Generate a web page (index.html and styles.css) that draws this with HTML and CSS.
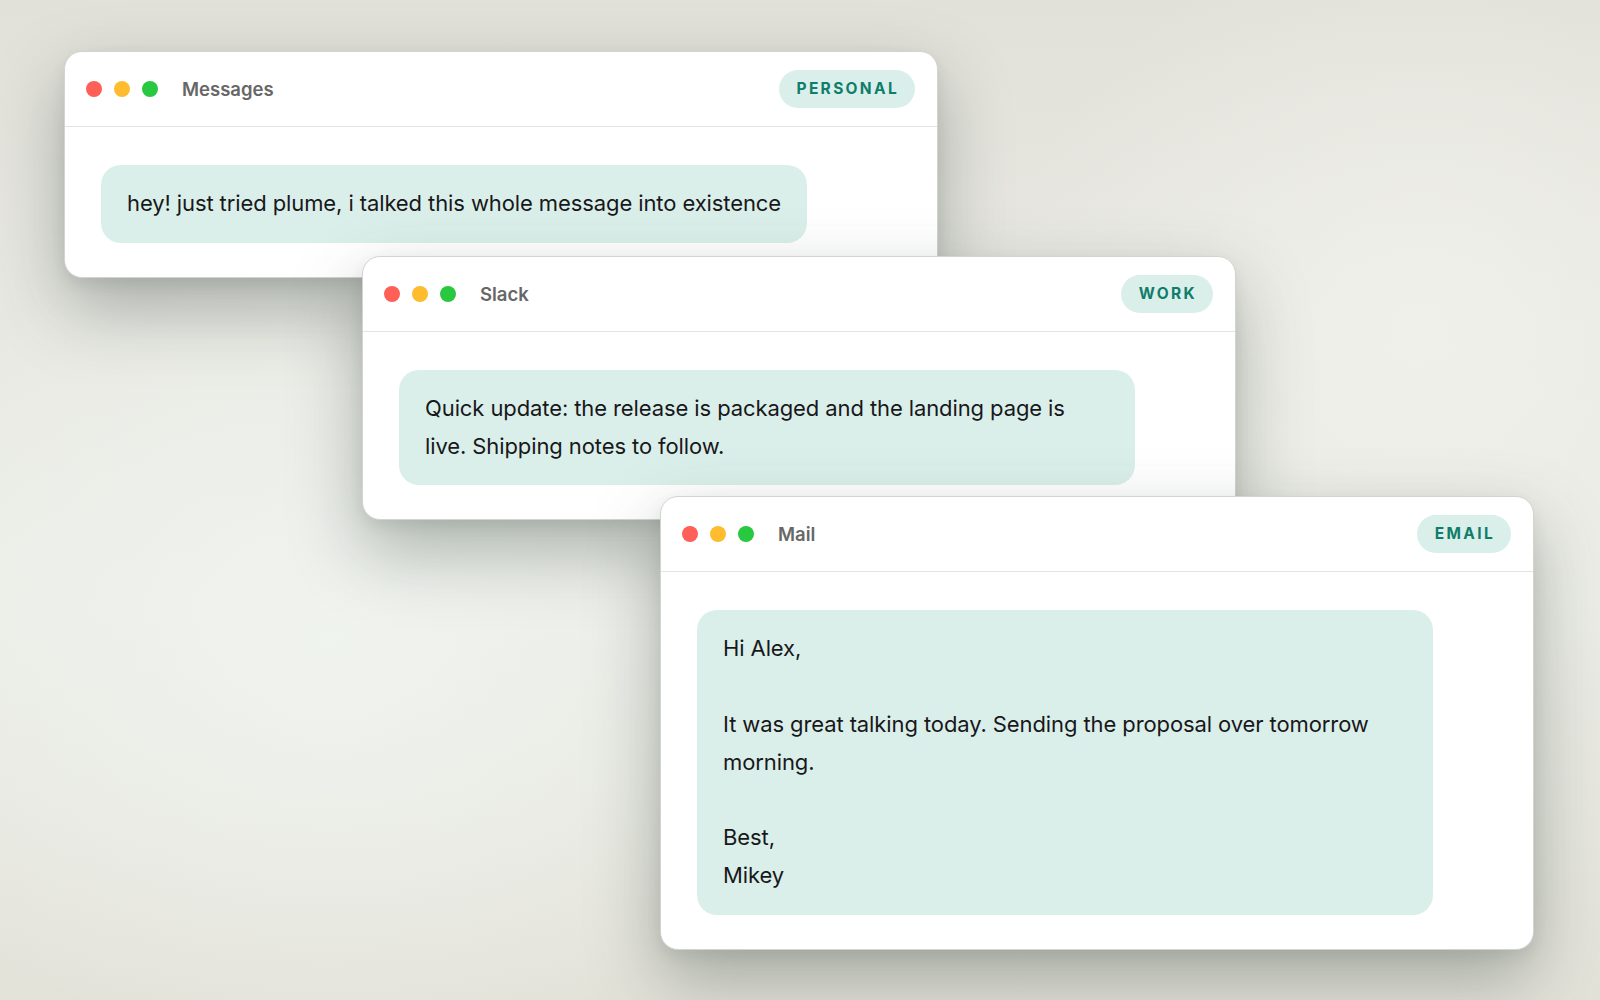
FILE: index.html
```html
<!DOCTYPE html>
<html lang="en">
<head>
<meta charset="utf-8">
<title>Plume</title>
<link rel="stylesheet" href="styles.css">
</head>
<body>
<main class="stack">
  <section class="window window-1">
    <header class="titlebar">
      <div class="lights"><span class="dot red"></span><span class="dot yellow"></span><span class="dot green"></span></div>
      <span class="app">Messages</span>
      <span class="tag">PERSONAL</span>
    </header>
    <div class="body">
      <div class="bubble">hey! just tried plume, i talked this whole message into existence</div>
    </div>
  </section>
  <section class="window window-2">
    <header class="titlebar">
      <div class="lights"><span class="dot red"></span><span class="dot yellow"></span><span class="dot green"></span></div>
      <span class="app">Slack</span>
      <span class="tag">WORK</span>
    </header>
    <div class="body">
      <div class="bubble">Quick update: the release is packaged and the landing page is live. Shipping notes to follow.</div>
    </div>
  </section>
  <section class="window window-3">
    <header class="titlebar">
      <div class="lights"><span class="dot red"></span><span class="dot yellow"></span><span class="dot green"></span></div>
      <span class="app">Mail</span>
      <span class="tag">EMAIL</span>
    </header>
    <div class="body">
      <div class="bubble"><p>Hi Alex,</p><p>It was great talking today. Sending the proposal over tomorrow morning.</p><p>Best,<br>Mikey</p></div>
    </div>
  </section>
</main>
</body>
</html>
```
FILE: styles.css
```css
* { box-sizing: border-box; }
html, body { margin: 0; height: 100%; }
body {
  width: 1600px;
  height: 1000px;
  overflow: hidden;
  font-family: Inter, "Noto Sans", sans-serif;
  color: #18181a;
  background:
    radial-gradient(ellipse 520px 420px at 330px 640px, rgba(240, 244, 239, 0.95), rgba(240, 244, 239, 0) 100%),
    radial-gradient(ellipse 420px 400px at 1420px 330px, rgba(241, 241, 235, 0.9), rgba(241, 241, 235, 0) 100%),
    linear-gradient(180deg, #e1e0d9 0%, #e8e8e2 30%, #ebece6 60%, #e3e2d9 100%);
}
.stack {
  display: flex;
  flex-direction: column;
  align-items: flex-start;
  padding: 51px 0 0 64px;
}
.window {
  position: relative;
  width: 874px;
  background: #ffffff;
  border: 1px solid #d3d3cf;
  border-radius: 18px;
  overflow: hidden;
  box-shadow: 0 30px 70px rgba(50, 66, 58, 0.36), 0 6px 16px rgba(0, 0, 0, 0.07);
}
.window-1 { z-index: 1; }
.window-2 { z-index: 2; margin: -22px 0 0 298px; }
.window-3 { z-index: 3; margin: -24px 0 0 596px; }
.titlebar {
  display: flex;
  align-items: center;
  height: 75px;
  padding: 18px 22px 18px 22px;
  border-bottom: 1px solid #e4e4e0;
}
.lights { display: flex; gap: 12px; margin-left: -1px; }
.dot { width: 16px; height: 16px; border-radius: 50%; display: block; }
.red { background: #fe5f57; }
.yellow { background: #febc2e; }
.green { background: #28c840; }
.app {
  margin-left: 24px;
  font-size: 18.5px;
  font-weight: 600;
  color: #676767;
}
.tag {
  margin-left: auto;
  height: 38px;
  line-height: 38px;
  padding: 0 16px 0 18px;
  border-radius: 19px;
  background: #dbefea;
  color: #0f7d6b;
  font-size: 15.5px;
  font-weight: 700;
  letter-spacing: 0.15em;
}
.body {
  padding: 38px 36px 34px 36px;
}
.bubble {
  display: inline-block;
  max-width: 736px;
  padding: 20px 26px;
  border-radius: 20px;
  background: #dbefea;
  font-size: 22px;
  letter-spacing: -0.1px;
  line-height: 37.8px;
  color: #18181a;
}
.window-3 .bubble { display: block; width: 736px; }
.bubble p { margin: 0; }
.bubble p + p { margin-top: 37.8px; }
```
